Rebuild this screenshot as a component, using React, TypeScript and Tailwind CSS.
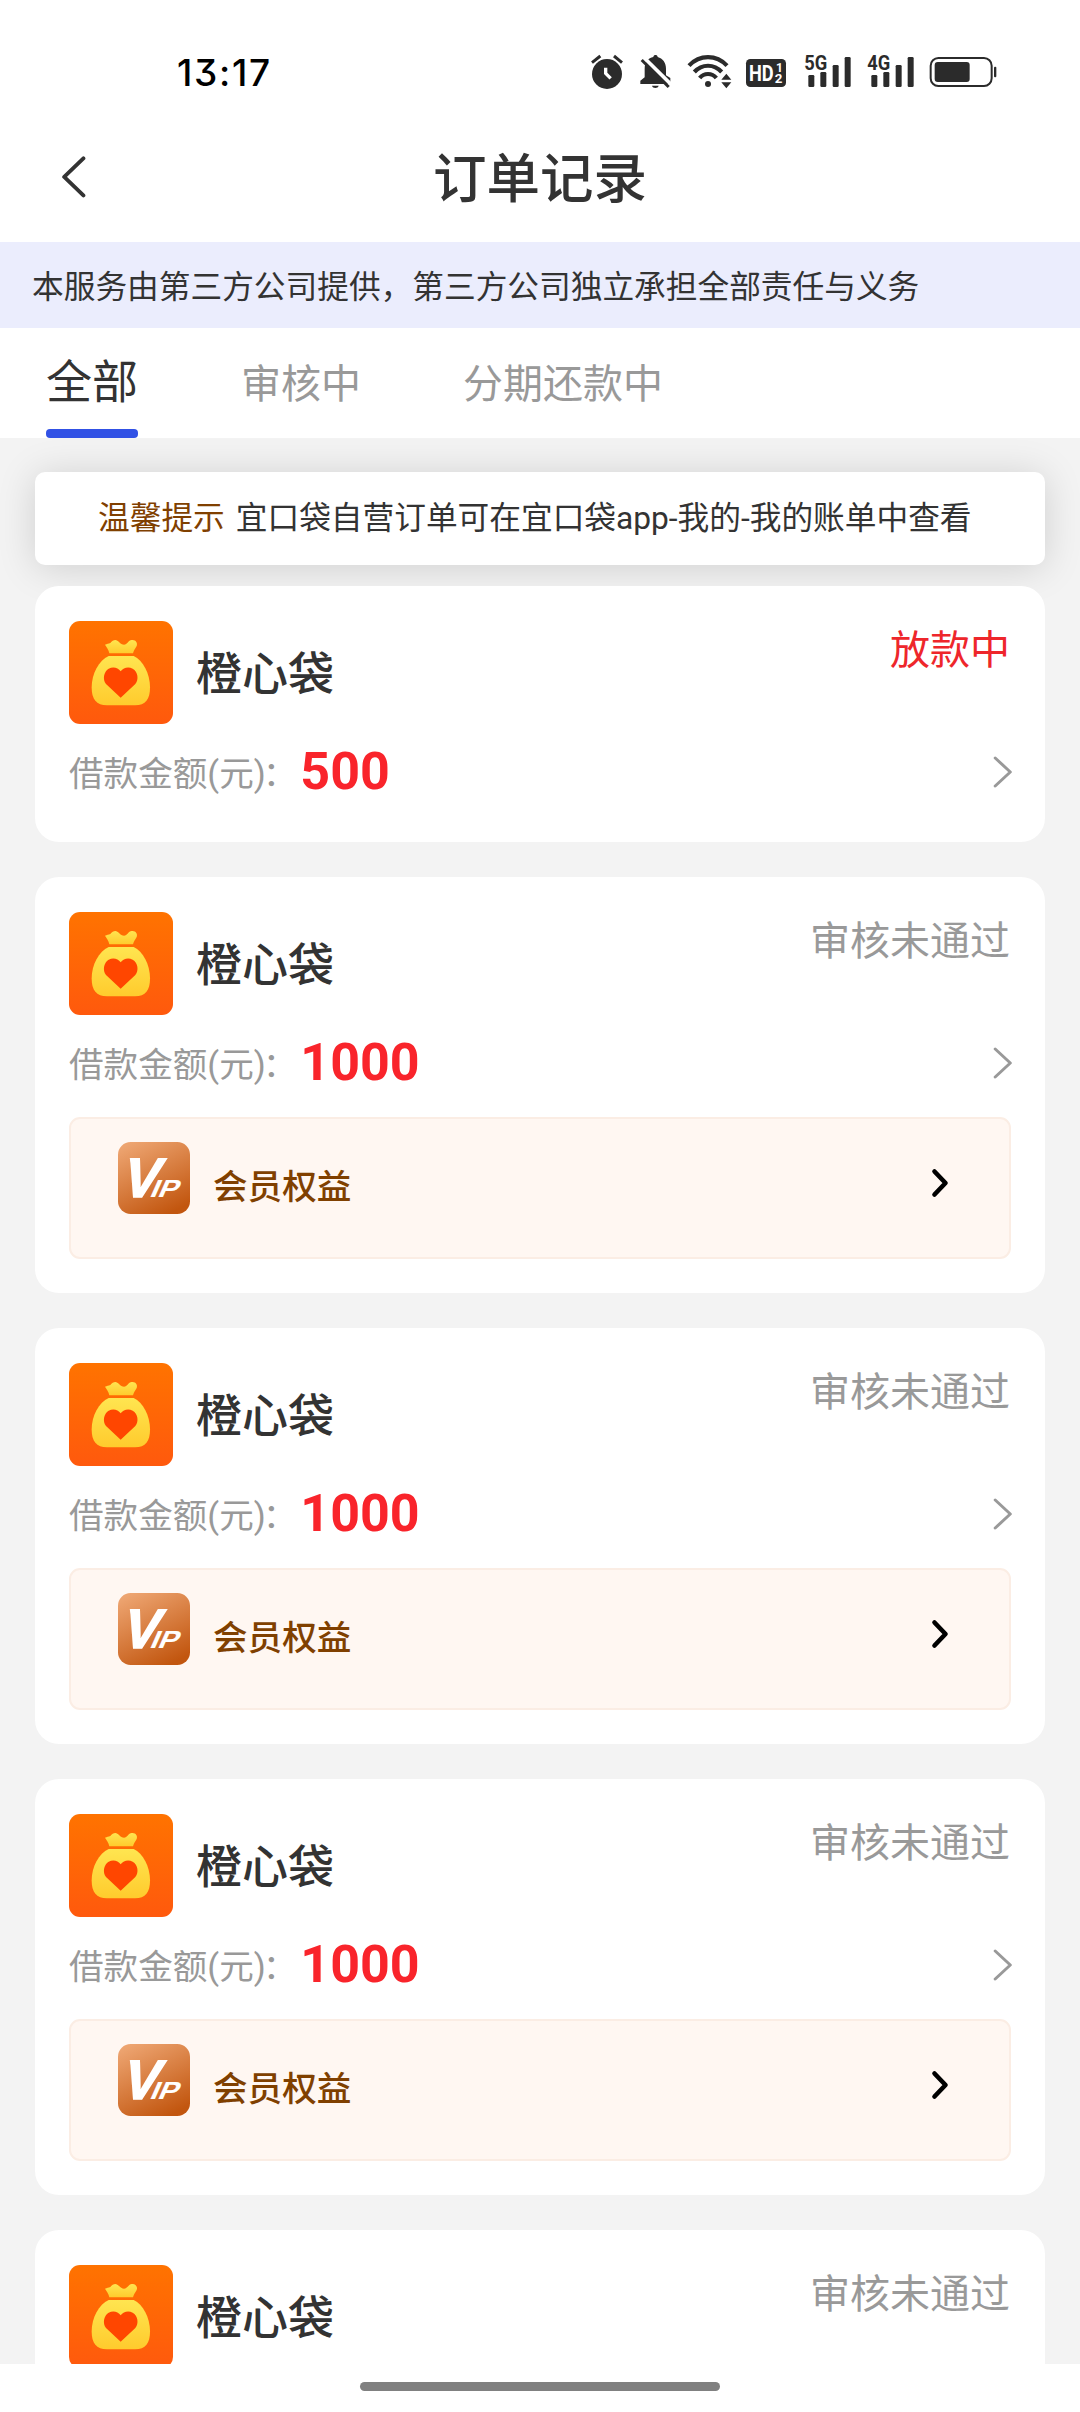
import React from "react";

const dark = "#2b2b2b";

function AlarmIcon() {
  return (
    <svg width="34" height="40" viewBox="90 36 102 120" className="mr-[14.7px]">
      <circle cx="141" cy="102" r="45" fill={dark} />
      <path d="M96 68 L121 48 M162 48 L186 68" stroke={dark} strokeWidth="9" />
      <path d="M137 83 V100 L152 115" fill="none" stroke="#fff" strokeWidth="10" />
    </svg>
  );
}

function BellOffIcon() {
  return (
    <svg width="32" height="40" viewBox="236 36 96 120" className="mr-[16px]">
      <path
        d="M240 132 V122 L253 112 V86 C253 66 264 54 279 51 C280 43 291 43 292 51 C307 55 317 68 317 86 V106 L330 114 V128 L322 132 Z"
        fill={dark}
      />
      <path d="M275 137 H295 C293 146 277 146 275 137 Z" fill={dark} />
      <path d="M250 52 L332 133" stroke="#fff" strokeWidth="11" />
      <path d="M244 60 L325 141" stroke={dark} strokeWidth="9" />
    </svg>
  );
}

function WifiIcon() {
  return (
    <svg width="45" height="40" viewBox="380 36 135 120" className="mr-[13.3px]">
      <g fill="none" stroke={dark} strokeWidth="12.5">
        <path d="M386 77 C418 43 468 43 500 77" />
        <path d="M402 96 C425 71 461 71 484 96" />
        <path d="M418 114 C431 98 455 98 468 114" />
      </g>
      <circle cx="443" cy="132" r="9" fill={dark} />
      <path d="M483 119 L498 101 L513 119 Z M483 127 L498 145 L513 127 Z" fill={dark} />
    </svg>
  );
}

function HdIcon() {
  return (
    <svg width="42" height="40" viewBox="555 36 126 120" className="mr-[17px]">
      <rect x="558" y="57" width="120" height="84" rx="13" fill={dark} />
      <g fill="#fff" fontFamily="Roboto, sans-serif" fontWeight="700">
        <text x="567" y="123" fontSize="65" textLength="74" lengthAdjust="spacingAndGlyphs">HD</text>
        <text x="648" y="96" fontSize="36">1</text>
        <text x="644" y="130" fontSize="40">2</text>
      </g>
    </svg>
  );
}

function SignalIcon({ label, className }: { label: string; className: string }) {
  return (
    <svg width="48" height="40" viewBox="732 36 144 120" className={className}>
      <text
        x="733"
        y="91"
        fontSize="63"
        fontFamily="Roboto, sans-serif"
        fontWeight="700"
        fill={dark}
        textLength="69"
        lengthAdjust="spacingAndGlyphs"
      >
        {label}
      </text>
      <g fill={dark}>
        <rect x="745" y="105" width="18" height="36" rx="4" />
        <rect x="781" y="96" width="18" height="45" rx="4" />
        <rect x="818" y="75" width="18" height="66" rx="4" />
        <rect x="854" y="51" width="18" height="90" rx="4" />
      </g>
    </svg>
  );
}

function BatteryIcon() {
  return (
    <svg width="68" height="40" viewBox="1108 36 204 120">
      <rect x="1113" y="54" width="183" height="84" rx="23" fill="none" stroke={dark} strokeWidth="6" />
      <rect x="1125" y="66" width="105" height="60" rx="9" fill={dark} />
      <rect x="1303" y="80" width="7" height="32" rx="3" fill={dark} />
    </svg>
  );
}

function StatusBar() {
  return (
    <div className="flex h-[118px] shrink-0 items-start justify-between pl-[177px] pr-[82.7px]">
      <div className="mt-[50px] font-[Inter] text-[37px] leading-[46px] font-medium tracking-[1.7px] text-black [font-feature-settings:'cv09']">
        13:17
      </div>
      <div className="mt-[52px] flex h-10 items-center">
        <AlarmIcon />
        <BellOffIcon />
        <WifiIcon />
        <HdIcon />
        <SignalIcon label="5G" className="mr-[15.3px]" />
        <SignalIcon label="4G" className="mr-[14px]" />
        <BatteryIcon />
      </div>
    </div>
  );
}

function Header() {
  return (
    <div className="grid h-[124px] shrink-0 grid-cols-3 items-start">
      <svg width="24" height="44" viewBox="0 0 24 44" className="mt-[37px] ml-[62px]">
        <path d="M21.4 3.4 L2.2 21.9 L21.4 40.4" fill="none" stroke="#333" strokeWidth="3.9" strokeLinecap="round" strokeLinejoin="round" />
      </svg>
      <h1 className="mt-[26px] text-center text-[53.5px] leading-[72px] font-medium text-[#333]">订单记录</h1>
    </div>
  );
}

function Tabs() {
  return (
    <div className="z-10 flex h-[110px] shrink-0 bg-white pl-[46px]">
      <div className="flex flex-col justify-between">
        <span className="mt-[22px] text-[46px] leading-[64px] text-[#333]">全部</span>
        <span className="h-[9px] rounded-[4px] bg-[#3151e5]" />
      </div>
      <span className="mt-[29px] ml-[103px] text-[40px] leading-[56px] text-[#999]">审核中</span>
      <span className="mt-[29px] ml-[102px] text-[40px] leading-[56px] text-[#999]">分期还款中</span>
    </div>
  );
}

function BagLogo() {
  return (
    <svg width="104" height="103" viewBox="0 0 312 309">
      <defs>
        <linearGradient id="bagBg" x1="0" y1="0" x2="0" y2="1">
          <stop offset="0" stopColor="#ff7300" />
          <stop offset="1" stopColor="#ff590d" />
        </linearGradient>
        <linearGradient id="bagFill" x1="0" y1="0" x2="0" y2="1">
          <stop offset="0" stopColor="#ffe550" />
          <stop offset="1" stopColor="#ffcb2d" />
        </linearGradient>
      </defs>
      <rect width="312" height="309" rx="33" fill="url(#bagBg)" />
      <path
        d="M108 71 C114 69 118 68 124 66 C130 58 139 55 145 59 C151 62 156 71 165 71 C175 71 178 58 188 57 C199 55 207 65 203 75 C199 83 195 86 192 97 H121 C119 85 112 78 108 71 Z"
        fill="url(#bagFill)"
      />
      <path
        d="M119 105 H194 C222 118 243 158 243 199 C243 235 230 253 198 253 H114 C82 253 68 235 68 199 C68 158 90 118 119 105 Z"
        fill="url(#bagFill)"
      />
      <path
        d="M155 230 L111 189 C100 176 104 151 119 143 C133 136 147 140 155 151 C163 140 178 136 191 143 C207 151 210 176 199 189 Z"
        fill="#ff4600"
      />
    </svg>
  );
}

function VipLogo() {
  return (
    <svg width="72" height="72" viewBox="0 0 216 216">
      <defs>
        <linearGradient id="vipBg" x1="0.2" y1="0" x2="0.7" y2="1">
          <stop offset="0" stopColor="#eda470" />
          <stop offset="1" stopColor="#c2560f" />
        </linearGradient>
      </defs>
      <rect width="216" height="216" rx="38" fill="url(#vipBg)" />
      <g fill="#fff" fontFamily="'Liberation Sans', sans-serif" fontWeight="700" stroke="#fff">
        <text transform="translate(5 165) skewX(-16)" fontSize="166" textLength="108" lengthAdjust="spacingAndGlyphs" strokeWidth="5">V</text>
        <text transform="translate(92 166) skewX(-24)" fontSize="74" textLength="82" lengthAdjust="spacingAndGlyphs" strokeWidth="0.5">IP</text>
      </g>
      <path d="M35 49 H66 V63 H39 Z" fill="#fff" />
    </svg>
  );
}

function VipPanel() {
  return (
    <div className="mt-[18px] flex h-[142px] items-start rounded-[11px] border-2 border-[#fbede4] bg-[#fff7f2] pl-[47px] pr-[58px]">
      <div className="mt-[23px]">
        <VipLogo />
      </div>
      <span className="mt-[44px] ml-[23px] flex-1 text-[34.6px] leading-[48px] font-medium text-[#804000]">会员权益</span>
      <svg width="20" height="30" viewBox="0 0 20 30" className="mt-[49px]">
        <path d="M3.5 3.5 L14.5 15 L3.5 26.5" fill="none" stroke="#000" strokeWidth="4.6" strokeLinecap="round" strokeLinejoin="round" />
      </svg>
    </div>
  );
}

type Order = { amount?: string; status: string; active?: boolean; vip?: boolean };

const orders: Order[] = [
  { amount: "500", status: "放款中", active: true },
  { amount: "1000", status: "审核未通过", vip: true },
  { amount: "1000", status: "审核未通过", vip: true },
  { amount: "1000", status: "审核未通过", vip: true },
  { status: "审核未通过" },
];

function OrderCard({ order }: { order: Order }) {
  return (
    <div className={`relative shrink-0 rounded-[24px] bg-white px-[34px] pt-[35px] ${order.vip ? "h-[416px]" : "h-[256px]"}`}>
      <div className="flex h-[103px] items-start">
        <BagLogo />
        <span className="mt-[21px] ml-[23px] flex-1 text-[46px] leading-[64px] font-medium text-[#333]">橙心袋</span>
        <span className={`mt-[2px] mr-px text-[40px] leading-[56px] ${order.active ? "text-[#ee262b]" : "text-[#999]"}`}>
          {order.status}
        </span>
      </div>
      {order.amount && (
        <div className="mt-[16px] flex h-[68px] items-center">
          <span className="mb-px flex text-[34.6px] leading-[48px] text-[#999]">
            <span>借款金额(元)</span>
            <span className="-ml-[3px] mr-[3px]">：</span>
          </span>
          <span className="mb-[4px] flex-1 font-[Roboto] text-[52px] leading-[60px] font-bold text-[#f9242b]">{order.amount}</span>
          <svg width="20" height="32" viewBox="0 0 20 32" className="-mr-px mb-[4px]">
            <path d="M3.2 2 L18.3 16 L3.2 30" fill="none" stroke="#999" strokeWidth="3" strokeLinecap="round" strokeLinejoin="round" />
          </svg>
        </div>
      )}
      {order.vip && <VipPanel />}
    </div>
  );
}

export default function App() {
  return (
    <div className="flex h-[2412px] w-[1080px] flex-col overflow-hidden bg-white font-[Roboto,'Noto_Sans_CJK_SC',sans-serif]">
      <StatusBar />
      <Header />
      <div className="flex h-[86px] shrink-0 items-center bg-[#ebedfd] pt-[5px] pl-[32px] text-[31.7px] leading-[44px] whitespace-nowrap text-[#333]">
        本服务由第三方公司提供，第三方公司独立承担全部责任与义务
      </div>
      <Tabs />
      <div className="flex h-[1926px] shrink-0 flex-col overflow-hidden bg-[#f3f3f3] px-[35px] pt-[34px]">
        <div className="flex h-[93px] shrink-0 items-center rounded-[10px] bg-white pl-[63px] text-[31.7px] leading-[44px] whitespace-nowrap shadow-[0_3px_38px_rgba(0,0,0,0.15)]">
          <span className="mr-[11px] text-[#804000]">温馨提示</span>
          <span className="text-[#333]">宜口袋自营订单可在宜口袋app-我的-我的账单中查看</span>
        </div>
        <div className="mt-[21px] flex flex-col gap-[35px]">
          {orders.map((order, i) => (
            <OrderCard key={i} order={order} />
          ))}
        </div>
      </div>
      <div className="flex h-[48px] shrink-0 justify-center bg-white pt-[18px]">
        <div className="h-[9px] w-[360px] rounded-full bg-[#808080]" />
      </div>
    </div>
  );
}
